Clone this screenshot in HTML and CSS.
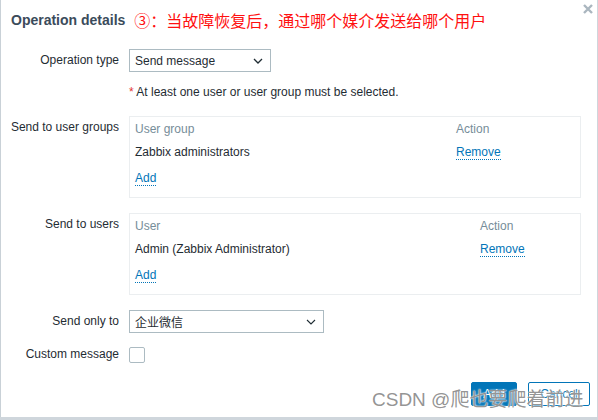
FILE: index.html
```html
<!DOCTYPE html>
<html>
<head>
<meta charset="utf-8">
<link rel="stylesheet" href="styles.css">
</head>
<body>
<div class="dialog">
  <div class="head">
    <h4 class="title">Operation details</h4>
    <span class="annot">③：当故障恢复后，通过哪个媒介发送给哪个用户</span>
    <span class="close"><svg width="10" height="10" viewBox="0 0 10 10"><path d="M1 1L9 9M9 1L1 9" stroke="#aab6bf" stroke-width="2.4"/></svg></span>
  </div>
  <div class="form">
    <div class="label">Operation type</div>
    <div class="field"><span class="select sel-type"><span>Send message</span><svg width="10" height="6" viewBox="0 0 10 6"><path d="M1 1L5 5L9 1" fill="none" stroke="#1f2c33" stroke-width="1.3"/></svg></span></div>

    <div class="label"></div>
    <div class="field note"><span class="req">*</span> At least one user or user group must be selected.</div>

    <div class="label">Send to user groups</div>
    <div class="field">
      <div class="box grid-groups">
        <div class="th">User group</div><div class="th">Action</div>
        <div class="td r2">Zabbix administrators</div><div class="td r2"><a class="link">Remove</a></div>
        <div class="td r3"><a class="link">Add</a></div>
      </div>
    </div>

    <div class="label">Send to users</div>
    <div class="field">
      <div class="box grid-users">
        <div class="th">User</div><div class="th">Action</div>
        <div class="td r2">Admin (Zabbix Administrator)</div><div class="td r2"><a class="link">Remove</a></div>
        <div class="td r3"><a class="link">Add</a></div>
      </div>
    </div>

    <div class="label">Send only to</div>
    <div class="field"><span class="select sel-media"><span class="cjk">企业微信</span><svg width="10" height="6" viewBox="0 0 10 6"><path d="M1 1L5 5L9 1" fill="none" stroke="#1f2c33" stroke-width="1.1"/></svg></span></div>

    <div class="label label-check">Custom message</div>
    <div class="field check-field"><span class="checkbox"></span></div>
  </div>
  <div class="footer">
    <button class="btn primary">Add</button>
    <button class="btn alt">Cancel</button>
  </div>
  <div class="watermark">CSDN @爬也要爬着前进</div>
</div>
</body>
</html>
```
FILE: styles.css
```css
html, body {
  margin: 0;
  padding: 0;
}
body {
  background: #cfd6dc;
  font-family: "Liberation Sans", Arial, sans-serif;
  font-size: 12px;
  color: #1f2c33;
}
.dialog {
  position: relative;
  width: 597px;
  height: 417px;
  border-left: 1px solid #c9d1d7;
  background: #fff;
  box-sizing: border-box;
}
.head {
  display: flex;
  align-items: flex-start;
  padding: 11px 4px 0 10px;
  height: 38px;
  box-sizing: border-box;
}
.title {
  margin: 0;
  font-size: 14px;
  line-height: 18px;
  font-weight: bold;
  color: #3b4b5b;
}
.annot {
  margin-left: 9px;
  margin-top: -1px;
  font-family: "Noto Sans CJK SC", sans-serif;
  font-size: 16px;
  line-height: 20px;
  color: #ff1010;
}
.close {
  margin-left: auto;
  margin-top: -7px;
  display: flex;
}
.form {
  display: grid;
  grid-template-columns: 118px 452px;
  column-gap: 10px;
  row-gap: 15px;
  margin-top: 11px;
}
.label {
  text-align: right;
  line-height: 14px;
  padding-top: 4px;
  white-space: nowrap;
}
.label-check {
  padding-top: 0;
  margin-top: -1px;
}
.check-field {
  margin-top: -1px;
}
.field {
  line-height: 14px;
}
.select {
  display: flex;
  align-items: center;
  justify-content: space-between;
  height: 23px;
  box-sizing: border-box;
  border: 1px solid #acbbc2;
  background: #fff;
  padding: 0 7px 0 5px;
}
.sel-type { width: 142px; }
.sel-media { width: 195px; }
.cjk {
  font-family: "Noto Sans CJK SC", sans-serif;
  font-size: 12px;
}
.note {
  margin-top: -2px;
  padding-bottom: 2px;
  color: #1f2c33;
}
.req { color: #e33734; }
.box {
  display: grid;
  border: 1px solid #ebeef0;
  padding: 5px 5px 12px 5px;
  box-sizing: border-box;
  line-height: 14px;
}
.grid-groups { grid-template-columns: 321px 1fr; }
.grid-users { grid-template-columns: 345px 1fr; }
.th { color: #768d99; }
.r2 { margin-top: 9px; }
.r3 { margin-top: 12px; }
.link {
  color: #0275b8;
  border-bottom: 1px dotted #0275b8;
  cursor: pointer;
}
.checkbox {
  display: block;
  width: 16px;
  height: 16px;
  box-sizing: border-box;
  border: 1px solid #acbbc2;
  border-radius: 2px;
}
.footer {
  display: flex;
  justify-content: flex-end;
  gap: 11px;
  padding-right: 7px;
  margin-top: 19px;
}
.btn {
  height: 24px;
  box-sizing: border-box;
  font-family: "Liberation Sans", Arial, sans-serif;
  font-size: 12px;
  border-radius: 2px;
  padding: 0 10px;
}
.primary {
  background: #0275b8;
  border: 1px solid #0275b8;
  color: #fff;
  width: 46px;
}
.alt {
  background: #fff;
  border: 1px solid #0275b8;
  color: #0275b8;
  width: 62px;
}
.watermark {
  position: absolute;
  left: 371px;
  top: 389px;
  font-family: "Liberation Sans", "Noto Sans CJK SC", sans-serif;
  font-size: 19px;
  line-height: 22px;
  color: rgba(120, 120, 120, 0.8);
  text-shadow: 0 0 2px #fff, 0 0 1px #fff;
  white-space: nowrap;
}
```
